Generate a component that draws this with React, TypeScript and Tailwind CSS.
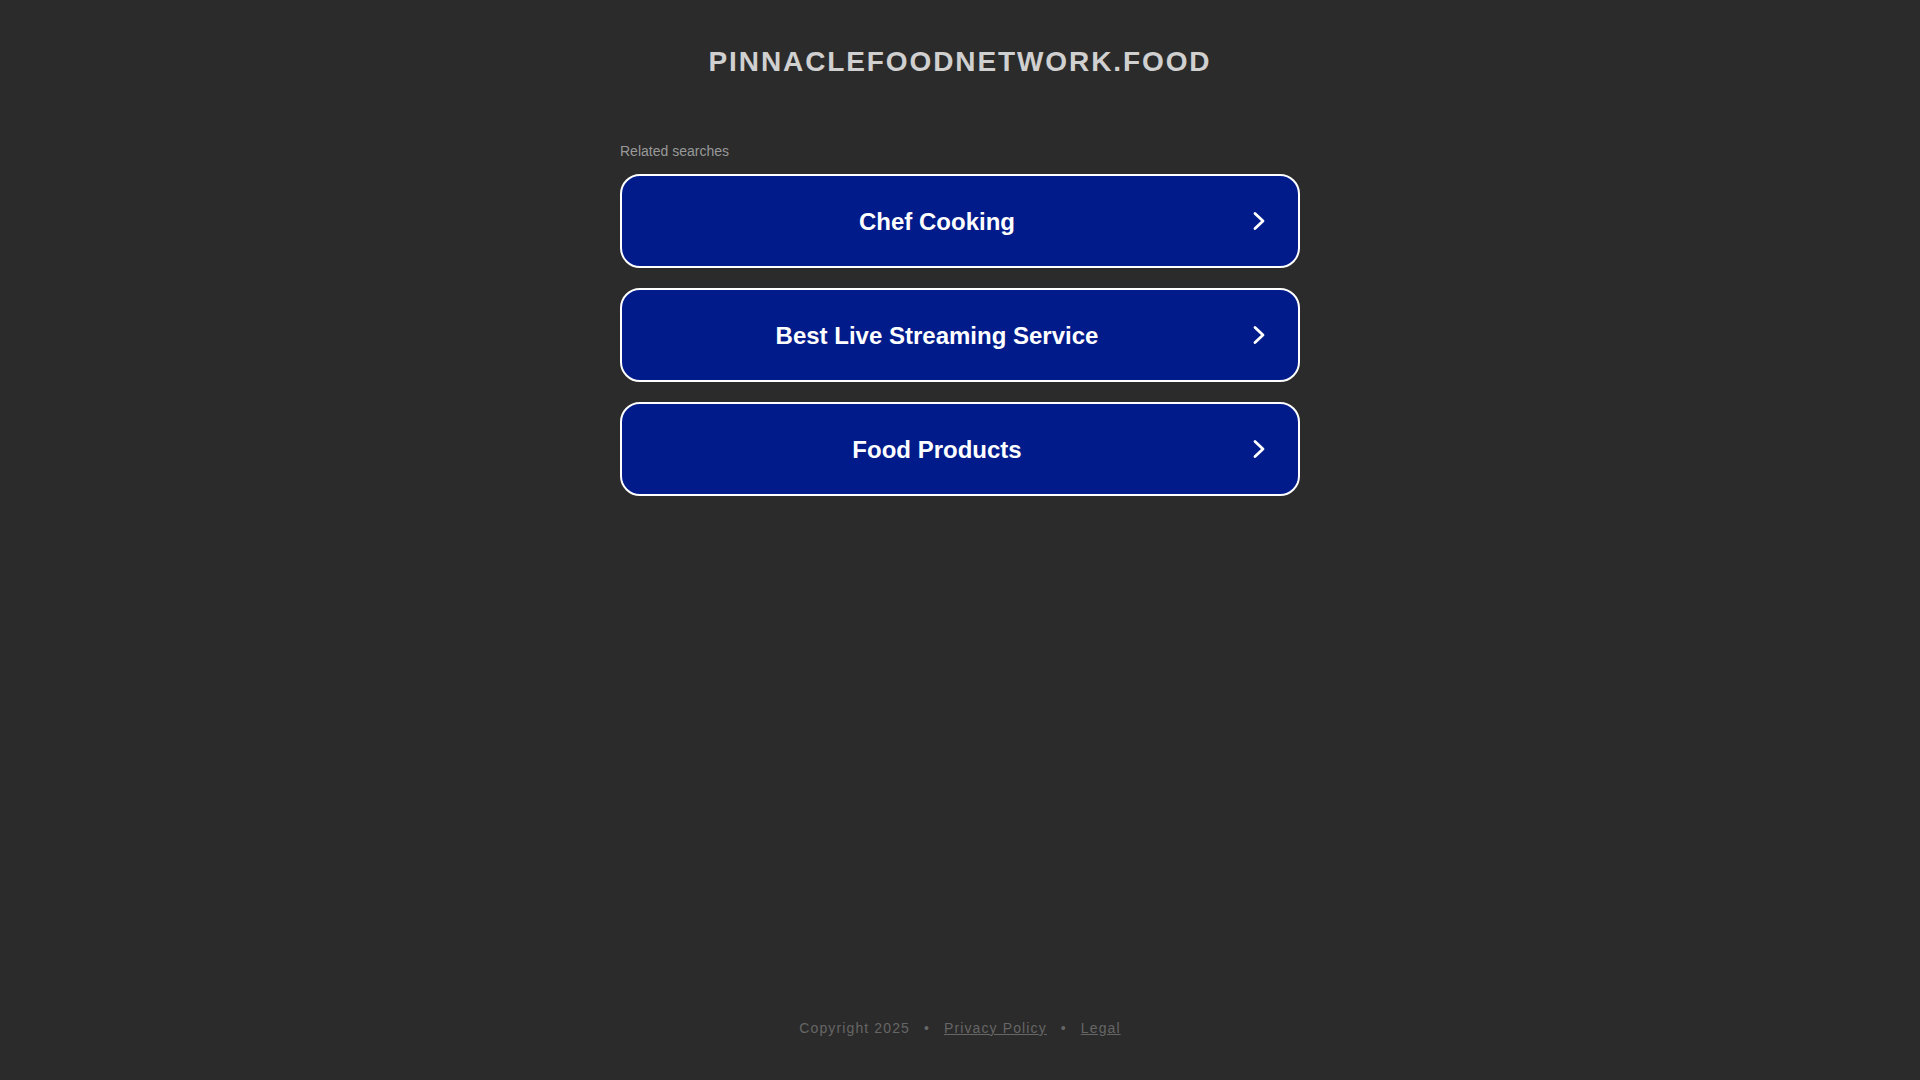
const searches = ["Chef Cooking", "Best Live Streaming Service", "Food Products"];

function Chevron() {
  return (
    <svg width="14" height="20" viewBox="0 0 14 20" fill="none" className="flex-shrink-0">
      <polyline
        points="3,2.5 11,10 3,17.5"
        stroke="white"
        strokeWidth="2.8"
        strokeLinecap="round"
        strokeLinejoin="round"
      />
    </svg>
  );
}

function SearchLink({ label }: { label: string }) {
  return (
    <a
      href="#"
      className="flex h-[94px] w-full items-center rounded-[20px] border-2 border-white bg-[#011b8b] pl-0 pr-[32px] text-white"
    >
      <span className="flex-1 pt-[1px] text-center text-[24px] font-bold leading-none">{label}</span>
      <Chevron />
    </a>
  );
}

export default function App() {
  return (
    <div
      className="flex h-screen flex-col bg-[#2b2b2b]"
      style={{ fontFamily: '"Liberation Sans", Arial, sans-serif' }}
    >
      {/* Domain heading */}
      <h1 className="pt-[45px] text-center text-[28px] font-bold leading-[34px] tracking-[1.9px] text-[#d0d0d0]">
        PINNACLEFOODNETWORK.FOOD
      </h1>

      {/* Related searches */}
      <div className="mx-auto mt-[64px] w-[680px]">
        <p className="mb-[15px] text-[14px] leading-[16px] text-[#999999]">Related searches</p>
        <div className="flex flex-col gap-[20px]">
          {searches.map((s) => (
            <SearchLink key={s} label={s} />
          ))}
        </div>
      </div>

      {/* Footer */}
      <footer className="mt-auto pb-[42px] text-center text-[14px] leading-[20px] tracking-[0.08em] text-[#666666]">
        <span>Copyright 2025</span>
        <span className="mx-[14px]">•</span>
        <a href="#" className="underline">
          Privacy Policy
        </a>
        <span className="mx-[14px]">•</span>
        <a href="#" className="underline">
          Legal
        </a>
      </footer>
    </div>
  );
}
